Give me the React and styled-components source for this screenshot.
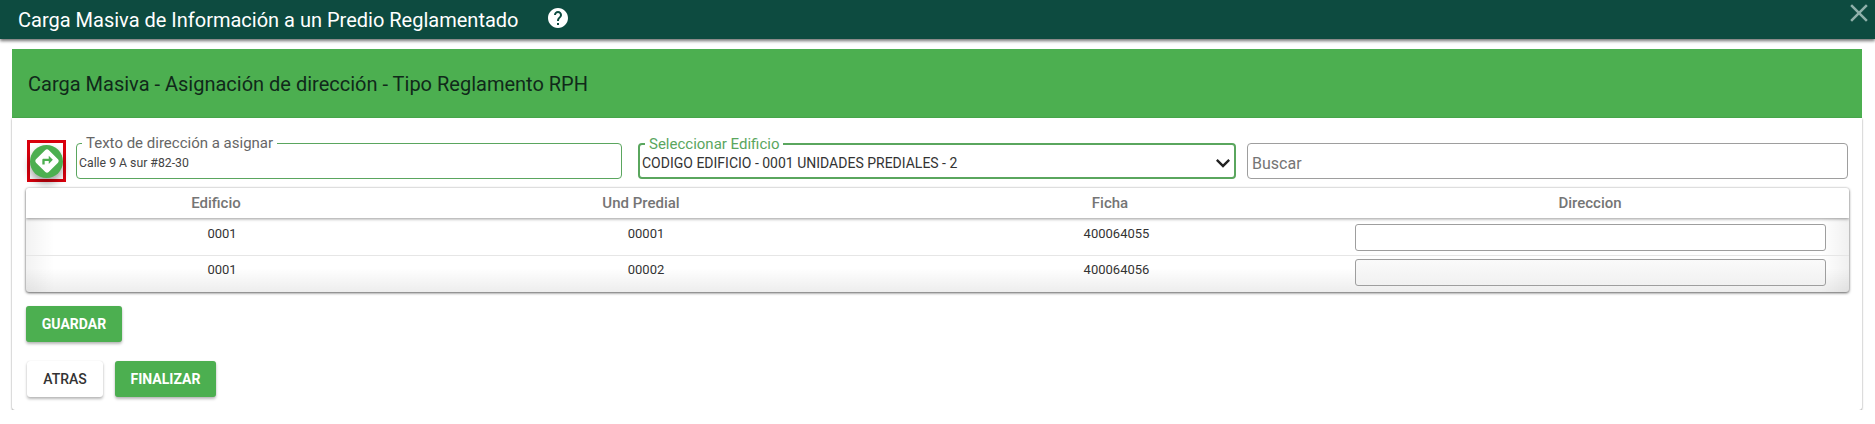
import React from "react";
import styled, { createGlobalStyle } from "styled-components";
import { MdDirections, MdHelp, MdClose, MdKeyboardArrowDown } from "react-icons/md";

const GlobalStyle = createGlobalStyle`
  html, body {
    margin: 0;
    padding: 0;
    background: #fff;
    font-family: Roboto, "Liberation Sans", sans-serif;
    overflow: hidden;
  }
  * { box-sizing: border-box; }
`;

const Header = styled.header`
  display: flex;
  align-items: center;
  height: 39px;
  padding: 0 1px 0 18px;
  background: #0d4b40;
  color: #fff;
  box-shadow: 0 2px 3px rgba(0, 0, 0, 0.55);
`;

const Title = styled.h1`
  margin: 0;
  font-size: 20px;
  font-weight: 400;
  line-height: 30px;
`;

const HelpBtn = styled.span`
  display: flex;
  margin-left: 27px;
  margin-top: -3px;
  font-size: 24px;
`;

const CloseBtn = styled.span`
  display: flex;
  margin-left: auto;
  margin-top: -13px;
  color: #8fb0aa;
  font-size: 30px;
`;

const Main = styled.main`
  margin: 10px 13px 0 12px;
`;

const Banner = styled.div`
  display: flex;
  align-items: center;
  height: 69px;
  padding: 0 16px;
  background: #4caf50;
  color: #10291a;
  font-size: 20px;
`;

const Card = styled.section`
  height: 292px;
  padding: 25px 14px 0;
  background: #fff;
  border-radius: 0 0 3px 3px;
  box-shadow: 0 1px 2px rgba(0, 0, 0, 0.4), 0 0 2px rgba(0, 0, 0, 0.12);
`;

const Filters = styled.div`
  display: flex;
  align-items: flex-start;
  height: 36px;
`;

const DirectionMark = styled.div`
  display: flex;
  align-items: center;
  justify-content: center;
  width: 39px;
  height: 42px;
  margin: -3px 10px 0 1px;
  border: 3px solid #d9000d;
  flex: none;
`;

const RoundBtn = styled.button`
  display: flex;
  align-items: center;
  justify-content: center;
  flex: none;
  width: 33px;
  height: 33px;
  padding: 0;
  border: 0;
  border-radius: 50%;
  background: #4caf50;
  color: #fff;
  font-size: 28px;
  box-shadow: 0 5px 9px rgba(0, 0, 0, 0.38);
`;

const Field = styled.label`
  position: relative;
  display: flex;
  align-items: center;
  justify-content: space-between;
  width: ${(p) => p.$width}px;
  height: 36px;
  margin-right: ${(p) => p.$gap || 0}px;
  padding: 4px ${(p) => (p.$tight ? 2 : 4)}px 0;
  border: ${(p) => (p.$focus ? "2px solid #5aa65e" : p.$green ? "1px solid #5aa65e" : "1px solid #9e9e9e")};
  border-radius: 4px;
  background: #fff;
  flex: none;
`;

const FloatLabel = styled.span`
  position: absolute;
  top: -9px;
  left: 5px;
  padding: 0 4px;
  background: #fff;
  color: ${(p) => (p.$focus ? "#5aa65e" : "#666")};
  font-size: 15px;
  line-height: 16px;
`;

const ValueInput = styled.input`
  width: 100%;
  padding: 0;
  border: 0;
  outline: 0;
  background: transparent;
  color: #444;
  font: 400 12.25px Roboto, sans-serif;
`;

const SearchInput = styled(ValueInput)`
  font-size: 16px;
  &::placeholder { color: #757575; opacity: 1; }
`;

const SelectValue = styled.span`
  color: #333;
  font-size: 14px;
`;

const Chevron = styled.span`
  display: flex;
  margin-right: -5px;
  color: #222;
  font-size: 28px;
`;

const Table = styled.div`
  width: 1823px;
  height: 104px;
  margin-top: 9px;
  border-radius: 3px;
  overflow: hidden;
  background: #fff;
  box-shadow: 0 1px 3px rgba(0, 0, 0, 0.6), 0 0 2px rgba(0, 0, 0, 0.2);
`;

const HeadRow = styled.div`
  position: relative;
  display: grid;
  grid-template-columns: 367px 496px 442px 518px;
  align-items: center;
  height: 30px;
  background: #fff;
  box-shadow: 0 1px 3px rgba(0, 0, 0, 0.4);
`;

const HeadCell = styled.div`
  padding-left: ${(p) => p.$pad || 0}px;
  color: #757575;
  font-size: 15px;
  font-weight: 500;
  text-align: center;
`;

const BodyRows = styled.div`
  height: 74px;
  background:
    linear-gradient(to right, rgba(0, 0, 0, 0.05), rgba(0, 0, 0, 0) 28px),
    linear-gradient(to left, rgba(0, 0, 0, 0.06), rgba(0, 0, 0, 0) 28px),
    linear-gradient(to top, rgba(0, 0, 0, 0.07), rgba(0, 0, 0, 0) 24px);
`;

const Row = styled.div`
  display: grid;
  grid-template-columns: 367px 496px 442px 518px;
  height: ${(p) => (p.$last ? 36 : 38)}px;
  border-bottom: ${(p) => (p.$last ? "0" : "1px solid #e6e6e6")};
`;

const Cell = styled.div`
  padding-left: ${(p) => p.$pad || 0}px;
  padding-top: ${(p) => p.$top}px;
  color: #333;
  font-size: 13px;
  line-height: 14px;
  text-align: center;
`;

const InputCell = styled.div`
  display: flex;
  justify-content: center;
  padding-top: ${(p) => p.$top}px;
`;

const AddressInput = styled.input`
  width: 471px;
  height: 27px;
  border: 1px solid #9e9e9e;
  border-radius: 3px;
  outline: 0;
  background: ${(p) => (p.$tinted ? "linear-gradient(#fafafa, #f1f1f1)" : "#fff")};
`;

const Button = styled.button`
  display: block;
  width: ${(p) => p.$width}px;
  height: 36px;
  padding: 0;
  border: 0;
  border-radius: 3px;
  background: ${(p) => (p.$plain ? "#fff" : "#4caf50")};
  color: ${(p) => (p.$plain ? "#333" : "#fff")};
  font: ${(p) => (p.$plain ? 500 : 700)} 14px Roboto, sans-serif;
  box-shadow: 0 2px 3px rgba(0, 0, 0, 0.28), 0 0 1px rgba(0, 0, 0, 0.14);
`;

const SaveRow = styled.div`
  margin-top: 14px;
`;

const NavRow = styled.div`
  display: flex;
  gap: 12px;
  margin-top: 19px;
  padding-left: 1px;
`;

const rows = [
  { edificio: "0001", predial: "00001", ficha: "400064055", textTop: 9, inputTop: 6 },
  { edificio: "0001", predial: "00002", ficha: "400064056", textTop: 7, inputTop: 3, tinted: true, last: true },
];

export default function App() {
  return (
    <>
      <GlobalStyle />
      <Header>
        <Title>Carga Masiva de Información a un Predio Reglamentado</Title>
        <HelpBtn><MdHelp /></HelpBtn>
        <CloseBtn><MdClose /></CloseBtn>
      </Header>
      <Main>
        <Banner>Carga Masiva - Asignación de dirección - Tipo Reglamento RPH</Banner>
        <Card>
          <Filters>
            <DirectionMark>
              <RoundBtn aria-label="Asignar dirección"><MdDirections /></RoundBtn>
            </DirectionMark>
            <Field $width={546} $gap={16} $green $tight>
              <FloatLabel>Texto de dirección a asignar</FloatLabel>
              <ValueInput readOnly value="Calle 9 A sur #82-30" />
            </Field>
            <Field $width={598} $gap={11} $focus $tight>
              <FloatLabel $focus>Seleccionar Edificio</FloatLabel>
              <SelectValue>CODIGO EDIFICIO - 0001 UNIDADES PREDIALES - 2</SelectValue>
              <Chevron><MdKeyboardArrowDown /></Chevron>
            </Field>
            <Field $width={601}>
              <SearchInput placeholder="Buscar" />
            </Field>
          </Filters>
          <Table>
            <HeadRow>
              <HeadCell $pad={13}>Edificio</HeadCell>
              <HeadCell>Und Predial</HeadCell>
              <HeadCell>Ficha</HeadCell>
              <HeadCell>Direccion</HeadCell>
            </HeadRow>
            <BodyRows>
              {rows.map((r) => (
                <Row key={r.ficha} $last={r.last}>
                  <Cell $pad={25} $top={r.textTop}>{r.edificio}</Cell>
                  <Cell $pad={10} $top={r.textTop}>{r.predial}</Cell>
                  <Cell $pad={13} $top={r.textTop}>{r.ficha}</Cell>
                  <InputCell $top={r.inputTop}>
                    <AddressInput $tinted={r.tinted} />
                  </InputCell>
                </Row>
              ))}
            </BodyRows>
          </Table>
          <SaveRow>
            <Button $width={96}>GUARDAR</Button>
          </SaveRow>
          <NavRow>
            <Button $width={76} $plain>ATRAS</Button>
            <Button $width={101}>FINALIZAR</Button>
          </NavRow>
        </Card>
      </Main>
    </>
  );
}
